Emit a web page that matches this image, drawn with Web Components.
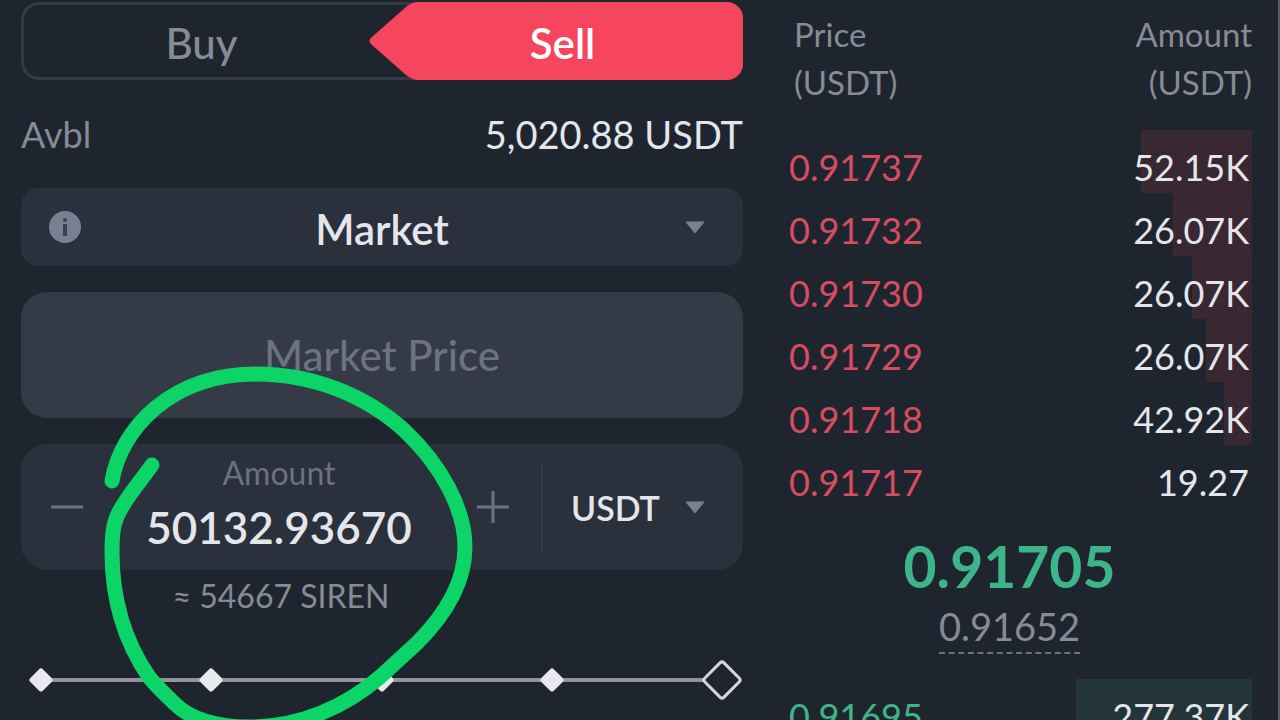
<!DOCTYPE html>
<html lang="en">
<head>
<meta charset="utf-8">
<meta name="viewport" content="width=device-width, initial-scale=1">
<title>Trade</title>
<style>
  :root {
    --bg: #1f252f;
    --field: #2a303c;
    --field-disabled: #343a46;
    --line: #343b47;
    --text: #e4e6ec;
    --muted: #868b96;
    --faint: #6c7280;
    --icon: #7a8093;
    --sell: #f6465d;
    --ask: #d64c61;
    --bid: #3db588;
    --ask-depth: #392831;
    --bid-depth: #233538;
  }
  html { height: 100%; overflow: hidden; background: var(--bg); }
  body {
    margin: 0;
    height: 100%;
    overflow: hidden;
    background: var(--bg);
    color: var(--text);
    font-family: Lato, "Open Sans", sans-serif;
  }
</style>
</head>
<body>
<trade-screen>
  <order-form slot="form">
    <side-toggle></side-toggle>
    <balance-row label="Avbl">5,020.88 USDT</balance-row>
    <type-select></type-select>
    <price-field></price-field>
    <amount-field value="50132.93670">≈ 54667 SIREN</amount-field>
    <percent-slider></percent-slider>
  </order-form>
  <order-book slot="book"></order-book>
  <pen-circle slot="note"></pen-circle>
</trade-screen>

<script>
const define = (name, html, setup) => {
  const template = document.createElement('template');
  template.innerHTML = html;
  customElements.define(name, class extends HTMLElement {
    constructor() {
      super();
      this.attachShadow({ mode: 'open' }).append(template.content.cloneNode(true));
    }
    connectedCallback() {
      if (setup) setup(this, this.shadowRoot);
    }
  });
};

const caret = '<svg class="caret" width="20" height="13" viewBox="0 0 20 13" aria-hidden="true"><path d="M1 1H19L10 12Z" fill="#7a8093" stroke="#7a8093" stroke-linejoin="round"/></svg>';

const controls = `
  * { box-sizing: border-box; }
  button, input, select {
    appearance: none; margin: 0; padding: 0; border: 0; background: none;
    color: inherit; font-family: inherit; outline: none;
  }
  option { background: #2a303c; }
`;

define('trade-screen', `
  <style>
    :host {
      display: grid; grid-template-columns: 722fr 463fr; gap: 46px;
      position: relative; min-height: 100%; box-sizing: border-box;
      padding: 2px 26px 0 21px; border-right: 2px solid #565b65;
    }
  </style>
  <slot name="form"></slot>
  <slot name="book"></slot>
  <slot name="note"></slot>
`);

define('order-form', `
  <style>:host { display: flex; flex-direction: column; gap: 26px; min-width: 0; }</style>
  <slot></slot>
`);

define('side-toggle', `
  <style>
    ${controls}
    :host { display: block; }
    div {
      display: grid; grid-template-columns: 1fr 1fr; height: 78px;
      border-radius: 18px; box-shadow: inset 0 0 0 3px var(--line);
    }
    button { padding-top: 4px; font-size: 42px; font-weight: 500; color: var(--muted); }
    .sell {
      position: relative; margin-left: -13px; padding-left: 13px;
      color: #fff; font-weight: 600; border-radius: 0 16px 16px 0;
      background: linear-gradient(var(--sell), var(--sell)) right / calc(100% - 51px) 100% no-repeat;
    }
    svg { position: absolute; left: 0; top: 0; }
  </style>
  <div role="group" aria-label="Order side">
    <button class="buy" type="button" aria-pressed="false">Buy</button>
    <button class="sell" type="button" aria-pressed="true">
      <svg width="52" height="78" viewBox="0 0 52 78" aria-hidden="true"><path d="M52 0H50Q43 0 37 5L3 35Q-2 39 3 43L37 73Q43 78 50 78H52Z" fill="#f6465d"/></svg>
      Sell
    </button>
  </div>
`);

define('balance-row', `
  <style>
    :host { display: flex; justify-content: space-between; font-size: 38px; line-height: 56px; }
    .label { font-size: 36px; color: var(--muted); }
  </style>
  <span class="label"></span>
  <span><slot></slot></span>
`, (el, root) => { root.querySelector('.label').textContent = el.getAttribute('label'); });

define('type-select', `
  <style>
    ${controls}
    :host { display: block; }
    div {
      display: grid; grid-template-columns: auto 1fr auto; align-items: center;
      height: 78px; border-radius: 18px; background: var(--field);
    }
    select {
      grid-area: 1 / 1 / 2 / 4; height: 78px; width: 100%;
      text-align: center; text-align-last: center;
      font-size: 42px; font-weight: 600; padding-top: 4px;
    }
    .info { grid-area: 1 / 1; z-index: 1; display: flex; margin-left: 28px; }
    .caret { grid-area: 1 / 3; margin-right: 38px; pointer-events: none; }
  </style>
  <div>
    <button class="info" type="button" aria-label="Order type help">
      <svg width="32" height="32" viewBox="0 0 32 32"><circle cx="16" cy="16" r="16" fill="#7a8093"/><circle cx="16" cy="9" r="2" fill="#3a414f"/><path d="M14 13H18V25H14Z" fill="#3a414f"/></svg>
    </button>
    <select aria-label="Order type"><option>Market</option><option>Limit</option></select>
    ${caret}
  </div>
`);

define('price-field', `
  <style>
    ${controls}
    :host { display: block; }
    input {
      display: block; width: 100%; height: 126px; border-radius: 26px;
      background: var(--field-disabled); text-align: center;
      font-size: 42px; font-weight: 500;
    }
    input::placeholder { color: var(--faint); opacity: 1; }
  </style>
  <input type="text" aria-label="Price" placeholder="Market Price" disabled>
`);

define('amount-field', `
  <style>
    ${controls}
    :host { display: grid; grid-template-columns: 520fr 202fr; }
    .box {
      grid-column: 1 / 3; display: grid; grid-template-columns: subgrid;
      height: 126px; border-radius: 26px; background: var(--field); align-items: center;
    }
    .stepper { display: grid; grid-template-columns: 92px 1fr 96px; align-items: center; }
    .stepper button { display: flex; justify-content: center; align-items: center; height: 90px; }
    .value { display: flex; flex-direction: column; text-align: center; min-width: 0; }
    label { font-size: 32px; line-height: 40px; color: var(--faint); }
    input {
      width: 100%; min-width: 0; height: 68px; text-align: center;
      font-size: 44px; font-weight: 600;
    }
    .unit { display: grid; grid-template-columns: 1fr auto; align-items: center; border-left: 2px solid var(--line); }
    select { grid-area: 1 / 1 / 2 / 3; width: 100%; height: 90px; padding-left: 28px; font-size: 34px; font-weight: 600; }
    .caret { grid-area: 1 / 2; margin-right: 38px; pointer-events: none; }
    .approx { font-size: 32px; line-height: 52px; text-align: center; color: var(--muted); }
  </style>
  <div class="box">
    <div class="stepper">
      <button type="button" aria-label="Decrease"><svg width="32" height="32" viewBox="0 0 32 32"><path d="M0 16H32" stroke="#6c7280" stroke-width="3"/></svg></button>
      <div class="value">
        <label for="amount">Amount</label>
        <input id="amount" type="text" inputmode="decimal">
      </div>
      <button type="button" aria-label="Increase"><svg width="32" height="32" viewBox="0 0 32 32"><path d="M0 16H32M16 0V32" stroke="#6c7280" stroke-width="3"/></svg></button>
    </div>
    <div class="unit">
      <select aria-label="Amount unit"><option>USDT</option><option>SIREN</option></select>
      ${caret}
    </div>
  </div>
  <div class="approx"><slot></slot></div>
`, (el, root) => { root.querySelector('input').value = el.getAttribute('value'); });

define('percent-slider', `
  <style>
    ${controls}
    :host { display: grid; align-items: center; height: 40px; margin: 12px 6px 0 5px; }
    .track, .ticks, input { grid-area: 1 / 1; }
    .track { height: 4px; margin: 0 15px; background: #92959f; }
    .ticks { display: flex; justify-content: space-between; margin: 0 6px; }
    .ticks i { width: 18px; height: 18px; border-radius: 3px; background: #e8e9ee; transform: rotate(45deg); }
    .ticks i:last-child { visibility: hidden; }
    input { width: 100%; height: 40px; z-index: 1; }
    input::-webkit-slider-thumb {
      appearance: none; box-sizing: border-box; width: 30px; height: 30px;
      border: 3px solid #d5d7dd; border-radius: 4px; background: #1f252f; transform: rotate(45deg);
    }
  </style>
  <div class="track"></div>
  <div class="ticks"><i></i><i></i><i></i><i></i><i></i></div>
  <input type="range" min="0" max="100" value="100" aria-label="Share of balance">
`);

define('order-book', `
  <style>
    :host { display: block; min-width: 0; }
    table { width: 100%; border-collapse: collapse; }
    th, td { padding: 0; text-align: left; font-weight: 400; }
    th:last-child, td:last-child { text-align: right; }
    th { font-size: 33px; line-height: 48px; color: var(--muted); padding: 8px 0 24px 5px; }
    td { font-size: 36px; line-height: 51px; padding-top: 12px; }
    td:last-child { padding-right: 3px; }
    tr { background: linear-gradient(var(--depth-color), var(--depth-color)) right / var(--depth) 100% no-repeat; }
    .asks { --depth-color: var(--ask-depth); }
    .bids { --depth-color: var(--bid-depth); }
    .asks td:first-child { color: var(--ask); }
    .bids td:first-child { color: var(--bid); }
    .mid { display: flex; flex-direction: column; align-items: center; padding: 24px 22px 25px 0; }
    .last { font-size: 57px; line-height: 68px; font-weight: 700; color: var(--bid); }
    a { font-size: 38px; line-height: 52px; color: var(--muted); text-decoration: none; border-bottom: 2px dashed #6c7280; }
  </style>
  <table>
    <thead><tr><th scope="col">Price<br>(USDT)</th><th scope="col">Amount<br>(USDT)</th></tr></thead>
    <tbody class="asks"></tbody>
  </table>
  <div class="mid"><span class="last">0.91705</span><a href="#index">0.91652</a></div>
  <table aria-label="Bids"><tbody class="bids"></tbody></table>
`, (el, root) => {
  const fill = (selector, rows) => {
    root.querySelector(selector).innerHTML = rows.map(([price, amount, depth]) =>
      `<tr style="--depth: ${depth}%"><td>${price}</td><td>${amount}</td></tr>`).join('');
  };
  fill('.asks', [
    ['0.91737', '52.15K', 24], ['0.91732', '26.07K', 17], ['0.91730', '26.07K', 13],
    ['0.91729', '26.07K', 10], ['0.91718', '42.92K', 6], ['0.91717', '19.27', 0]
  ]);
  fill('.bids', [['0.91695', '277.37K', 38]]);
});

define('pen-circle', `
  <style>
    :host { position: absolute; left: 100px; top: 360px; pointer-events: none; z-index: 2; }
    svg { display: block; }
  </style>
  <svg width="380" height="380" viewBox="100 360 380 380" aria-hidden="true">
    <path d="M112 481C121 428 172 374 256 374C312 374 366 395 405 431C442 466 465 510 465 547C465 583 445 615 417 643C405 654 393 665 380 677C345 707 300 727 250 727C215 727 190 719 174 703C165 694 157 687 149 677C125 642 112 600 112 552C112 530 114 519 122 507C130 493 142 479 152 465" fill="none" stroke="#0cd467" stroke-width="15" stroke-linecap="round" stroke-linejoin="round"/>
  </svg>
`);
</script>
</body>
</html>
